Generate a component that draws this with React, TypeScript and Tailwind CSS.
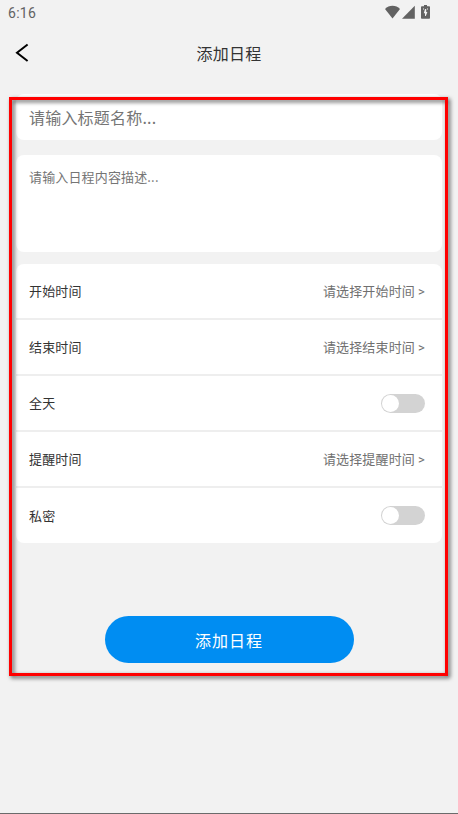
import { useState } from "react";

interface PickerRowProps {
  label: string;
  placeholder: string;
}

interface SwitchRowProps {
  label: string;
  checked: boolean;
  onChange: (checked: boolean) => void;
}

const ROW_CLASS =
  "flex h-14 items-center justify-between border-b-2 border-[#eeeeee] pr-[17px] pl-[13px] last:h-[55px] last:border-b-0";

const StatusBar = () => {
  return (
    <div className="flex h-[26px] items-center justify-between pr-[28px] pl-2 text-[#626262]">
      <span className="font-[Roboto] text-[14px] leading-none tracking-[0.3px]">
        6:16
      </span>
      <div className="flex h-4 items-start">
        <svg width="15" height="14" viewBox="0 0 15 14" fill="currentColor">
          <path d="M7.5 13.5 0 4.1C2.1 1.9 4.6.8 7.5.8s5.4 1.1 7.5 3.3z" />
        </svg>
        <svg
          className="ml-[2px]"
          width="13"
          height="14"
          viewBox="0 0 13 14"
          fill="currentColor"
        >
          <path d="M12.8.8v13H0z" />
        </svg>
        <svg
          className="ml-[6px]"
          width="9"
          height="14"
          viewBox="0 0 9 14"
          fill="currentColor"
        >
          <path d="M3 0h3v1.2h2.2q.8 0 .8.8v10.8q0 1-.8 1H.8q-.8 0-.8-1V2q0-.8.8-.8H3z" />
          <path
            d="M2 3.5h1v1H2zM6 3.5h1v1H6zM4 4h1.2v3H6.4L4.8 11H4V8.3H2.8z"
            fill="#f2f2f2"
          />
        </svg>
      </div>
    </div>
  );
};

const PickerRow = ({ label, placeholder }: PickerRowProps) => {
  return (
    <div className={ROW_CLASS}>
      <span className="text-[#333333]">{label}</span>
      <button className="text-[#707070]">
        {placeholder} <span className="font-[Roboto]">&gt;</span>
      </button>
    </div>
  );
};

const SwitchRow = ({ label, checked, onChange }: SwitchRowProps) => {
  return (
    <div className={ROW_CLASS}>
      <span className="text-[#333333]">{label}</span>
      <button
        role="switch"
        aria-checked={checked}
        onClick={() => onChange(!checked)}
        className={`flex h-[19px] w-11 items-center rounded-full px-px ${
          checked ? "justify-end bg-[#008df2]" : "bg-[#d3d3d3]"
        }`}
      >
        <span className="size-[17px] rounded-full bg-white" />
      </button>
    </div>
  );
};

const App = () => {
  const [allDay, setAllDay] = useState(false);
  const [isPrivate, setIsPrivate] = useState(false);

  return (
    <div className="relative flex h-[814px] w-[458px] flex-col overflow-hidden border-b border-[#6b6b6b] bg-[#f2f2f2] font-['Noto_Sans_CJK_SC',sans-serif]">
      <StatusBar />
      <header className="grid h-[54px] grid-cols-[44px_1fr_44px] items-center">
        <button className="pl-[15px]" aria-label="返回">
          <svg width="14" height="20" viewBox="0 0 14 20" fill="none">
            <path d="M12.6 1.5 2 9.8l10.6 8.2" stroke="#000" strokeWidth="2" />
          </svg>
        </button>
        <h1 className="text-center text-[16px] tracking-[0.2px] text-[#333333]">
          添加日程
        </h1>
      </header>

      <main className="mx-4 mt-[14px] flex flex-col text-[13px] tracking-[0.15px]">
        <input
          className="h-[46px] rounded-[8px] bg-white pr-3 pl-[13px] text-[16px] tracking-[0.2px] placeholder:text-[#757575] focus:outline-none"
          placeholder="请输入标题名称..."
        />
        <textarea
          className="mt-[15px] h-[97px] resize-none rounded-[8px] bg-white px-[13px] pt-3 placeholder:text-[#757575] focus:outline-none"
          placeholder="请输入日程内容描述..."
        />
        <section className="mt-3 rounded-[8px] bg-white">
          <PickerRow label="开始时间" placeholder="请选择开始时间" />
          <PickerRow label="结束时间" placeholder="请选择结束时间" />
          <SwitchRow label="全天" checked={allDay} onChange={setAllDay} />
          <PickerRow label="提醒时间" placeholder="请选择提醒时间" />
          <SwitchRow
            label="私密"
            checked={isPrivate}
            onChange={setIsPrivate}
          />
        </section>
        <button className="mt-[73px] h-[47px] w-[249px] self-center rounded-full bg-[#008df2] text-[16px] tracking-[1px] text-white">
          添加日程
        </button>
      </main>

      {/* highlight frame over the form */}
      <div className="pointer-events-none absolute top-[97px] left-[9px] h-[579px] w-[439px] border-3 border-[#ff0000] drop-shadow-[2px_2px_2px_rgba(0,0,0,0.65)]" />
    </div>
  );
};

export default App;
